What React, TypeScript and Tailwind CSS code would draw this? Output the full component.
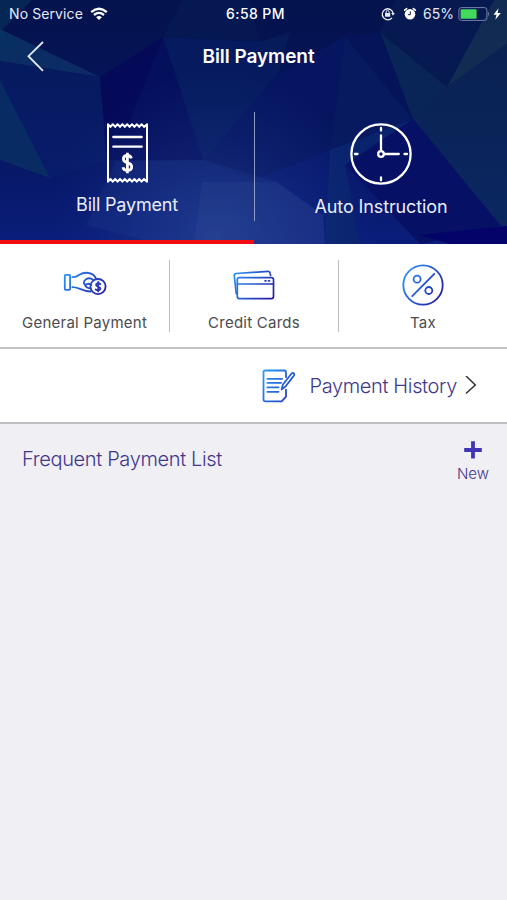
import React from "react";

const BLUE_STROKE = "url(#icon-blue)";

function Gradients() {
  return (
    <svg className="absolute h-0 w-0" aria-hidden="true">
      <defs>
        <linearGradient id="icon-blue" gradientUnits="userSpaceOnUse" x1="0" y1="6" x2="42" y2="34">
          <stop offset="0" stopColor="#2b9bf5" />
          <stop offset="0.5" stopColor="#2458d0" />
          <stop offset="1" stopColor="#2a1499" />
        </linearGradient>
      </defs>
    </svg>
  );
}

function Facets() {
  return (
    <svg className="absolute inset-0 h-full w-full" viewBox="0 0 507 244" preserveAspectRatio="none" aria-hidden="true">
      <defs>
        <linearGradient id="base" x1="0" y1="0" x2="0" y2="1">
          <stop offset="0" stopColor="#04124c" />
          <stop offset="0.5" stopColor="#06155d" />
          <stop offset="1" stopColor="#0a1d7a" />
        </linearGradient>
        <radialGradient id="glow" gradientUnits="userSpaceOnUse" cx="215" cy="235" r="165">
          <stop offset="0" stopColor="#2f50a0" stopOpacity="0.5" />
          <stop offset="1" stopColor="#1d3a94" stopOpacity="0" />
        </radialGradient>
        <linearGradient id="teal" x1="0" y1="0" x2="1" y2="1">
          <stop offset="0" stopColor="#083060" />
          <stop offset="1" stopColor="#0c2a66" />
        </linearGradient>
        <linearGradient id="right" x1="0" y1="0" x2="0" y2="1">
          <stop offset="0" stopColor="#0a2152" />
          <stop offset="1" stopColor="#0b2862" />
        </linearGradient>
        <linearGradient id="low-left" x1="0" y1="0" x2="0" y2="1">
          <stop offset="0" stopColor="#061a5e" />
          <stop offset="1" stopColor="#081c6c" />
        </linearGradient>
      </defs>
      <rect width="507" height="244" fill="url(#base)" />
      <polygon points="0,0 32,0 2,30 0,28" fill="#062656" />
      <polygon points="2,30 100,77 0,61 0,28" fill="url(#teal)" />
      <polygon points="0,61 100,77 106,160 50,178 0,80" fill="url(#low-left)" />
      <polygon points="0,80 50,178 0,160" fill="#072b62" />
      <polygon points="100,77 163,37 130,122 104,122" fill="#040958" />
      <polygon points="163,37 190,122 204,160 106,160 104,122 130,122" fill="#05105d" />
      <polygon points="163,37 182,0 250,0 260,42" fill="#051852" />
      <polygon points="163,37 260,42 278,74 204,160" fill="#061b5f" />
      <polygon points="278,74 345,36 330,150 254,180 204,160" fill="#06155f" />
      <polygon points="260,42 290,32 278,74" fill="#07235f" opacity="0.5" />
      <polygon points="345,36 413,120 330,150" fill="#07195f" />
      <polygon points="380,32 345,36 413,120" fill="#051358" />
      <polygon points="380,32 447,87 413,119" fill="#092456" />
      <polygon points="380,32 395,0 500,0 447,87" fill="#061950" />
      <polygon points="447,87 494,0 507,0 507,44" fill="#122b53" />
      <polygon points="447,87 507,44 507,244 501,226 413,119" fill="url(#right)" />
      <polygon points="413,119 501,226 420,244 345,164" fill="#061064" />
      <polygon points="330,150 413,119 345,165 360,244 325,244" fill="#09236d" />
      <polygon points="330,150 325,244 290,244 254,180" fill="#081976" opacity="0.4" />
      <polygon points="420,235 507,226 507,244 450,244" fill="#03036a" />
      <rect width="507" height="244" fill="url(#glow)" />
      <polygon points="116,161 205,160 277,182 323,215 325,244 160,244 86,225" fill="#3156a2" opacity="0.14" />
      <polygon points="202,182 277,182 323,215 325,244 194,244" fill="#4a68a5" opacity="0.13" />
    </svg>
  );
}

function Wifi() {
  return (
    <svg className="ml-[7px] h-[14px] w-[18px]" viewBox="0 0 18 14" fill="none" stroke="white" strokeWidth="2.3">
      <path d="M1.2 5.2Q9-1.6 16.8 5.2M4 8Q9 3.8 14 8" />
      <path d="M6.1 10.2Q9 7.7 11.9 10.2L9 13.1Z" fill="white" stroke="none" />
    </svg>
  );
}

function RotationLock() {
  return (
    <svg className="h-[14px] w-[14px]" viewBox="0 0 14 14" fill="none" stroke="#e8ecfa" strokeWidth="1.3">
      <path d="M11 10.8A5.5 5.5 0 1 1 12.1 6" />
      <path d="M10.2 6h3.6L12 8.7Z" fill="#e8ecfa" stroke="none" />
      <rect x="4" y="6" width="5.2" height="3.8" rx=".5" fill="#e8ecfa" stroke="none" />
      <path d="M5.1 6.4V5a1.5 1.5 0 0 1 3 0v1.4" strokeWidth="1" />
    </svg>
  );
}

function Alarm() {
  return (
    <svg className="ml-2 h-[14px] w-[14px]" viewBox="0 0 14 14">
      <circle cx="7" cy="7.3" r="5.3" fill="white" />
      <path d="M1.7 3.2 3.6 1.6M12.3 3.2 10.4 1.6" stroke="white" strokeWidth="1.7" strokeLinecap="round" />
      <path d="M7.3 4.4v3.3H4.9" stroke="#09164f" strokeWidth="1" fill="none" />
    </svg>
  );
}

function Battery() {
  return (
    <svg className="ml-[4px] h-[14px] w-[44px]" viewBox="0 0 44 14">
      <rect x=".9" y=".6" width="28" height="12.8" rx="2.5" fill="none" stroke="#7581aa" />
      <rect x="2.6" y="2.3" width="16" height="9.4" rx="1" fill="#43d95d" />
      <path d="M30.2 4.6q1.9 2.4 0 4.8Z" fill="#7581aa" />
      <path d="M40.5 1.3 35.5 7.7h3l-1.2 5 5.5-6.8h-3.2Z" fill="white" />
    </svg>
  );
}

function Receipt() {
  return (
    <svg className="h-[62px] w-[43px]" viewBox="0 0 43 62" fill="none" stroke="white" strokeWidth="2" strokeLinejoin="round">
      <path d="M2 2.2l2.4 2.7 2.4-2.7 2.4 2.7 2.4-2.7L14 4.9l2.4-2.7 2.4 2.7 2.4-2.7 2.4 2.7L26 2.2l2.4 2.7 2.4-2.7 2.4 2.7 2.4-2.7L38 4.9l3-2.7v57.5L38 57l-2.4 2.7-2.4-2.7-2.4 2.7-2.4-2.7-2.4 2.7-2.4-2.7-2.4 2.7-2.4-2.7-2.4 2.7L14 57l-2.4 2.7L9.2 57l-2.4 2.7L4.4 57 2 59.7Z" />
      <path d="M7.3 15h28.4M7.3 24.7h28.4" strokeWidth="2.3" strokeLinecap="round" />
      <path d="M25.4 36.3c-.6-2-2-2.8-4-2.8-2.5 0-4 1.4-4 3.4 0 2.2 1.5 3 4 3.8 2.8.8 4.3 1.8 4.3 4.1 0 2.3-1.7 3.6-4.3 3.6-2.4 0-4-1.1-4.4-3.2M21.4 30.8v20.4" strokeWidth="2.8" />
    </svg>
  );
}

function Clock() {
  return (
    <svg className="h-[62px] w-[62px]" viewBox="0 0 62 62" fill="none" stroke="white" strokeWidth="2.3">
      <circle cx="31" cy="31" r="29.6" />
      <circle cx="31" cy="31" r="2.8" />
      <path d="M31 28V12.3M34 31h14.8M31 5v2.5M31 54.5v2.8M5 31h2.5M54.5 31h2.5" strokeLinecap="round" />
    </svg>
  );
}

function HandCoin() {
  return (
    <svg className="h-[40px] w-[44px]" viewBox="0 0 44 40" fill="none" stroke={BLUE_STROKE} strokeWidth="1.8" strokeLinecap="round" strokeLinejoin="round">
      <rect x="1.8" y="9.8" width="5.3" height="15" rx=".8" />
      <path d="M9.4 12.2c3.8 0 5-.8 7-2.4 3.1-2 6-2.4 9.2-1.8 3.5.5 5.8 2 7.4 5.4" />
      <path d="M9.4 22.2c3 0 4.4.5 6.8 1.5 4 1.7 7.2 2.8 11.4 2.8" />
      <path d="M30 14.8c-2-1.6-4.6-2-6.9-.6-3.2 1.9-3 5.6.1 5.2 1.3-.2 2-.8 3-.6 1 .2 1.2 1 2.2 1.3M21.9 19.8c1 2.5 3 3.5 6 3.5" />
      <circle cx="35" cy="21.6" r="7.6" />
      <path d="M37.3 19.1c-1.2-1.4-4.5-1-4.2 1 .3 2 4.3 1.2 4.3 3.5 0 2.1-3.4 2.4-4.8.8M35.2 16.8v9.6" />
    </svg>
  );
}

function Cards() {
  return (
    <svg className="h-[40px] w-[44px]" viewBox="0 0 44 40" fill="none" stroke={BLUE_STROKE} strokeWidth="1.7" strokeLinecap="round" strokeLinejoin="round">
      <rect x="5.3" y="12.6" width="36.2" height="21" rx="2" />
      <path d="M5.3 19h36.2M4.2 28.6 2.3 10.7q-.2-2 1.8-2.2L36 6.4q1.8-.1 2.1 1.8l.5 2.2M33 15.8h1M36.5 15.8h1" />
    </svg>
  );
}

function Percent() {
  return (
    <svg className="h-[42px] w-[42px]" viewBox="0 0 42 42" fill="none" stroke={BLUE_STROKE} strokeWidth="1.8" strokeLinecap="round">
      <circle cx="21" cy="21" r="19.7" />
      <circle cx="15.1" cy="15.2" r="3.5" />
      <circle cx="26.8" cy="26.5" r="3.5" />
      <path d="M32.3 9.8 10.2 32.2" />
    </svg>
  );
}

function Note() {
  return (
    <svg className="h-[34px] w-[34px]" viewBox="0 0 34 34" fill="none" stroke={BLUE_STROKE} strokeWidth="1.8" strokeLinecap="round" strokeLinejoin="round">
      <path d="M24 8.2V3.3q0-1.8-1.8-1.8H3.3q-1.8 0-1.8 1.8v27.2q0 1.8 1.8 1.8h16.3l4.4-4.6v-7" />
      <path d="m19.6 20.4 1.3-4.9 8.7-11q1-1.1 2.1-.2t.3 2.2l-8.5 11Z" />
      <path d="M5.3 9.8h14.8M5.3 13.8h13.8M5.3 18.4h11.2M5.3 22.8h11.2" />
    </svg>
  );
}

function Service({ label, width, children }: { label: string; width: string; children: React.ReactNode }) {
  return (
    <div className={"flex flex-col items-center " + width}>
      <div className="flex h-[59px] items-center pt-[6px]">{children}</div>
      <span className="h-6 text-[15px] leading-6 tracking-[0.25px] whitespace-nowrap">{label}</span>
    </div>
  );
}

export default function App() {
  return (
    <div className="flex h-[900px] w-[507px] flex-col overflow-hidden bg-[#efeff4] font-['Inter','Liberation_Sans',sans-serif]">
      <Gradients />
      <header className="relative h-[244px] shrink-0 text-white">
        <Facets />
        <div className="relative flex h-full flex-col">
          <div className="grid h-[27px] grid-cols-[1fr_auto_1fr] items-center pr-[5px] pl-[9px] text-[14px]">
            <div className="flex items-center text-[#e4e8f7]">
              <span className="tracking-[0.1px]">No Service</span>
              <Wifi />
            </div>
            <span className="font-medium tracking-[0.4px]">6:58 PM</span>
            <div className="flex items-center justify-end">
              <RotationLock />
              <Alarm />
              <span className="ml-[6px] text-[#e4e8f7]">65%</span>
              <Battery />
            </div>
          </div>
          <div className="grid h-[59px] grid-cols-[60px_1fr_60px] items-center">
            <svg className="ml-[27px] h-[31px] w-[18px]" viewBox="0 0 18 31" fill="none" stroke="#e6e9f5" strokeWidth="1.8">
              <path d="M16 1 1.5 15.2 16 29.8" />
            </svg>
            <h1 className="pt-[2px] pl-[10px] text-center text-[19px] font-semibold tracking-[-0.05px]">Bill Payment</h1>
          </div>
          <nav className="flex h-[154px]">
            <div className="flex w-[254px] flex-col items-center pt-9">
              <Receipt />
              <span className="mt-[9px] text-[18px] leading-6 tracking-[-0.2px] text-[#e8edfa]">Bill Payment</span>
            </div>
            <div className="mt-[26px] h-[109px] w-px bg-[#8f9bc5]" />
            <div className="flex w-[252px] flex-col items-center pt-[37px]">
              <Clock />
              <span className="mt-[10px] text-[18px] leading-6 tracking-[-0.12px] text-[#e8edfa]">Auto Instruction</span>
            </div>
          </nav>
          <div className="h-1 w-[254px] bg-[#f30b12]" />
        </div>
      </header>
      <section className="flex h-[105px] shrink-0 border-b-2 border-[#c4c4c6] bg-white pt-[8px] text-[#4b4b4d]">
        <Service label="General Payment" width="w-[169px]"><HandCoin /></Service>
        <div className="mt-[8px] h-[72px] w-px bg-[#bdbdbf]" />
        <Service label="Credit Cards" width="w-[168px]"><Cards /></Service>
        <div className="mt-[8px] h-[72px] w-px bg-[#bdbdbf]" />
        <Service label="Tax" width="w-[168px]"><Percent /></Service>
      </section>
      <section className="flex h-[75px] shrink-0 items-center justify-end border-b-2 border-[#bfbfc3] bg-white pr-[29px] text-[#41378b]">
        <Note />
        <span className="ml-[13px] text-[20px] font-light tracking-[-0.35px] whitespace-nowrap">Payment History</span>
        <svg className="ml-[7px] h-[20px] w-[14px]" viewBox="0 0 14 20" fill="none" stroke="#333" strokeWidth="1.5">
          <path d="M2 0 11.3 9 2 17.5" />
        </svg>
      </section>
      <section className="flex items-start justify-between pt-4 pr-[18px] pl-[22px] text-[#41378b]">
        <h2 className="pt-1 text-[20px] leading-[30px] font-light tracking-[-0.35px]">Frequent Payment List</h2>
        <div className="flex flex-col items-center">
          <svg className="h-5 w-5" viewBox="0 0 20 20" stroke="#4036b5" strokeWidth="3.8">
            <path d="M10 1.3v17.2M1.2 10h17.6" />
          </svg>
          <span className="mt-[4px] text-[15px] leading-5 font-light">New</span>
        </div>
      </section>
    </div>
  );
}
